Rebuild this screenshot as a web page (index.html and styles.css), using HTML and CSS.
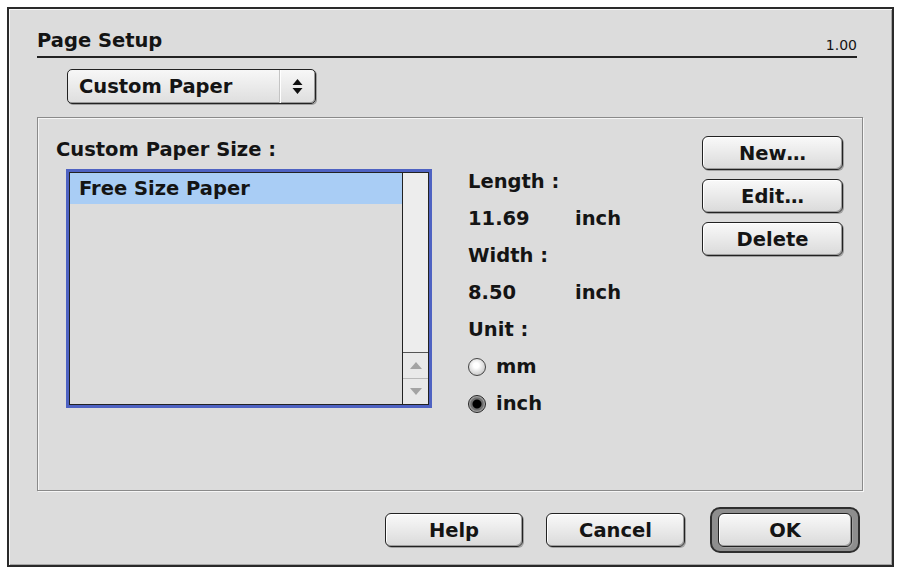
FILE: index.html
```html
<!DOCTYPE html>
<html lang="en">
<head>
  <meta charset="UTF-8" />
  <title>Page Setup</title>
  <link rel="stylesheet" href="styles.css">
</head>
<body>
  <div class="window">
    <header class="title-bar">
      <h1>Page Setup</h1>
      <span class="version">1.00</span>
    </header>

    <div class="popup">
      <span class="popup-label">Custom Paper</span>
      <span class="popup-arrows">
        <svg width="11" height="17" viewBox="0 0 11 17"><path d="M5.5 1 L10.5 7 H0.5 Z M5.5 16 L10.5 10 H0.5 Z" fill="#111"/></svg>
      </span>
    </div>

    <section class="panel">
      <div class="col-list">
        <div class="caption">Custom Paper Size :</div>
        <div class="list">
          <div class="list-inner">
            <ul class="items">
              <li class="selected">Free Size Paper</li>
            </ul>
            <div class="scrollbar">
              <div class="track"></div>
              <div class="arrow up">
                <svg width="12" height="7" viewBox="0 0 12 7"><path d="M6 0 L12 7 H0 Z" fill="#a4a4a4"/></svg>
              </div>
              <div class="arrow down">
                <svg width="12" height="7" viewBox="0 0 12 7"><path d="M6 7 L12 0 H0 Z" fill="#a4a4a4"/></svg>
              </div>
            </div>
          </div>
        </div>
      </div>

      <div class="col-fields">
        <div class="row">Length :</div>
        <div class="row"><span class="num">11.69</span><span>inch</span></div>
        <div class="row">Width :</div>
        <div class="row"><span class="num">8.50</span><span>inch</span></div>
        <div class="row">Unit :</div>
        <div class="row radio"><span class="dot"></span>mm</div>
        <div class="row radio on"><span class="dot"></span>inch</div>
      </div>

      <div class="col-buttons">
        <button class="btn">New…</button>
        <button class="btn">Edit…</button>
        <button class="btn">Delete</button>
      </div>
    </section>

    <footer class="actions">
      <button class="btn help">Help</button>
      <button class="btn cancel">Cancel</button>
      <div class="default-ring"><button class="btn ok">OK</button></div>
    </footer>
  </div>
</body>
</html>
```

FILE: styles.css
```css
:root {
  --face: #dcdcdc;
  --ink: #141414;
  --line: #222;
  --focus: #4e62c2;
  --select: #a9cdf5;
}
* { box-sizing: border-box; margin: 0; padding: 0; }
body {
  background: #fff;
  font-family: "DejaVu Sans", sans-serif;
  font-weight: 700;
  font-size: 19.5px;
  color: var(--ink);
}
.window {
  width: 887px; height: 560px;
  margin: 7px;
  border: 2px solid #2a2a2a;
  box-shadow: inset 1px 1px #f7f7f7, inset -1px -1px #a5a5a5;
  background: var(--face);
  padding: 0 29px 0 28px;
  display: flex; flex-direction: column;
}

/* title */
.title-bar {
  display: flex; justify-content: space-between; align-items: flex-end;
  padding: 20px 0 3px;
  margin-right: 6px;
  border-bottom: 2px solid var(--line);
}
.title-bar h1 { font-size: 19.5px; line-height: 24px; }
.version { font-weight: 400; font-size: 14px; line-height: 16px; }

/* popup menu */
.popup {
  display: flex;
  width: 249px; height: 35px;
  margin: 11px 0 0 30px;
  border: 1px solid var(--line);
  border-radius: 5px;
  background: linear-gradient(#f7f7f7, #dedede);
  box-shadow: inset -1px -1px #9a9a9a, 1px 1px 0 #9c9c9c;
}
.popup-label { flex: 1; padding-left: 11px; line-height: 33px; }
.popup-arrows {
  width: 36px;
  display: flex; align-items: center; justify-content: center;
  border-left: 1px solid #c4c4c4;
  box-shadow: inset 1px 0 #fff;
}

/* group panel */
.panel {
  display: flex;
  height: 374px;
  margin-top: 13px;
  padding: 17px 19px 0 18px;
  border: 1px solid #8a8a8a;
  box-shadow: inset 1px 1px #f6f6f6, 1px 1px 0 #f6f6f6;
}
.caption { padding-top: 3px; line-height: 24px; }
.list {
  width: 366px; height: 239px;
  margin: 7px 0 0 10px;
  border: 3px solid var(--focus);
  box-shadow: inset -1px -1px #b8c6f4;
}
.list-inner { display: flex; height: 100%; border: 1px solid var(--line); background: var(--face); }
.items { flex: 1; list-style: none; }
.items li { height: 31px; line-height: 31px; padding-left: 9px; }
.items li.selected { background: var(--select); }
.scrollbar {
  width: 26px;
  display: flex; flex-direction: column;
  border-left: 1px solid var(--line);
  background: #ededed;
}
.track { flex: 1; }
.arrow {
  height: 26px;
  display: flex; align-items: center; justify-content: center;
  border-top: 1px solid #555;
  background: #e9e9e9;
}
.arrow.down { border-top-color: #b9b9b9; }

/* length / width / unit */
.col-fields { margin-left: 36px; padding-top: 28px; width: 200px; }
.row { line-height: 37px; height: 37px; display: flex; align-items: center; }
.num { width: 107px; }
.radio .dot {
  width: 18px; height: 18px;
  margin-right: 10px;
  border-radius: 50%;
  border: 1px solid #444;
  background: radial-gradient(circle at 45% 40%, #fff 20%, #cfcfcf 70%, #8f8f8f 100%);
}
.radio.on .dot {
  background: radial-gradient(circle, #000 0 4px, #6f6f6f 5px 6px, #b5b5b5 8px 100%);
  border-color: #222;
}

/* buttons */
.col-buttons {
  margin-left: auto;
  display: flex; flex-direction: column; gap: 9px;
  margin-top: 1px;
}
.btn {
  font: inherit;
  color: var(--ink);
  height: 34px;
  border: 1px solid var(--line);
  border-radius: 6px;
  background: linear-gradient(#f9f9f9, #dadada);
  box-shadow: inset -1px -1px #9d9d9d, inset 1px 1px #fff, 1px 1px 0 #a0a0a0;
}
.col-buttons .btn { width: 141px; }

.actions {
  display: flex; justify-content: flex-end; align-items: center;
  height: 46px;
  margin: 16px 3px 0 0;
}
.help { width: 138px; }
.cancel { width: 139px; margin-left: 23px; }
.default-ring {
  margin-left: 25px;
  width: 150px; height: 46px;
  padding: 4px 6px;
  border: 2px solid #2e2e2e;
  border-radius: 10px;
  background: #8e8e8e;
}
.ok { width: 134px; }
```
